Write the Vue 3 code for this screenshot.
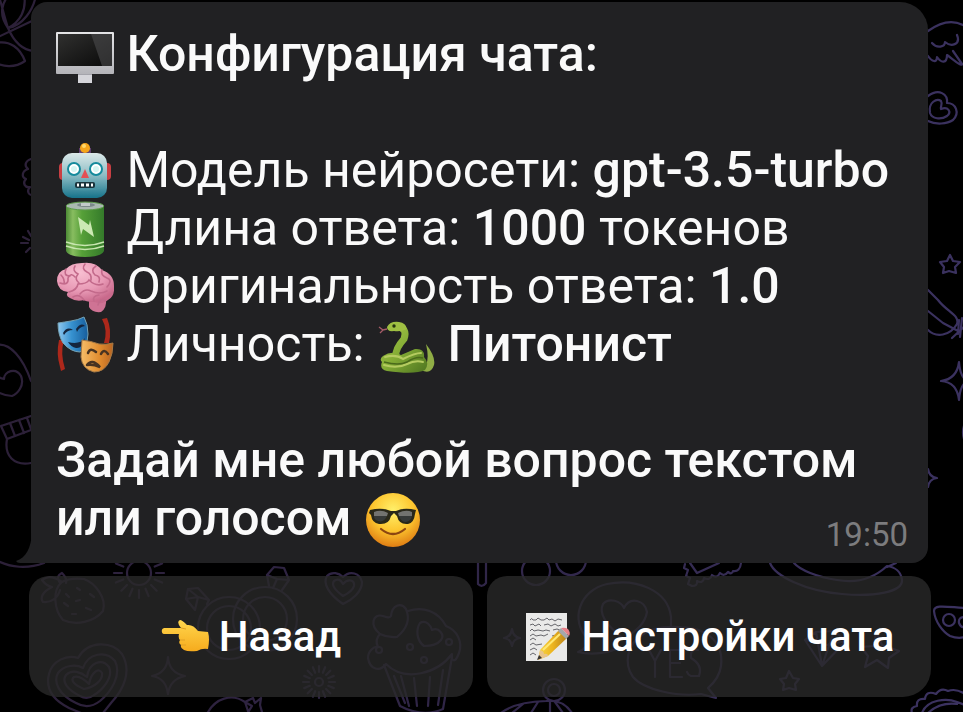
<script setup>
const time = '19:50'
const rays = Array.from({ length: 16 }, (_, i) => i * 22.5)
</script>

<template>
  <main class="chat">
    <svg class="wallpaper" viewBox="0 0 963 712" preserveAspectRatio="xMidYMid slice" aria-hidden="true">
      <defs>
        <linearGradient id="inkPage" gradientUnits="userSpaceOnUse" x1="0" y1="0" x2="963" y2="0">
          <stop offset="0" stop-color="#2c2038" />
          <stop offset="0.5" stop-color="#302648" />
          <stop offset="1" stop-color="#3b3260" />
        </linearGradient>
      </defs>
      <g fill="none" stroke="url(#inkPage)" stroke-width="2.2" stroke-linecap="round" stroke-linejoin="round">
        <!-- leaves -->
        <path d="M8 28C-2 14 2 2 10 -6M8 28C20 22 27 10 24 -6M8 28C22 26 34 10 36 -6M8 28C4 16 2 6 0 0M-4 38L34 20M8 28C14 42 22 50 34 51M-4 43C10 40 20 48 25 61C14 69 2 66 -4 63" />
        <!-- flower and sparks -->
        <path d="M31 159C25 161 24 166 28 169C22 171 21 177 26 179C22 183 25 188 30 187C26 191 29 196 33 195M28 231L31 236M23 237L29 240M21 243L28 243M26 252L30 248" />
        <!-- mitten -->
        <path d="M-4 345C10 342 23 358 31 381M-4 375C2 380 3 378 4 379C4 371 16 367 21 376C25 386 17 394 12 396C5 396 1 394 -4 391M1 426L31 416M1 426L7 439L31 430M10 423L15 436M19 420L24 433M27 418L31 429M7 439C4 456 14 466 31 463M-4 560C10 568 28 569 44 563" />
        <!-- wing, heart, star, feather -->
        <path d="M928 31C943 20 955 20 965 26M932 43C937 49 945 47 945 42C951 47 961 45 957 35M928 56C932 62 937 63 937 57C941 63 947 64 947 55C954 60 962 67 962 64L953 51" />
        <path d="M928 96C939 88 948 94 947 103C956 103 960 113 953 120C947 124 936 125 928 121M930 113C928 102 937 98 941 101C943 104 940 107 941 109C948 106 952 112 947 116C941 120 932 119 930 113Z" />
        <path d="M950 255L953 261L960 262L955 267L956 273L949 271L943 273L944 267L940 262L947 261Z" />
        <path d="M928 290L938 300C947 312 960 315 957 324C950 336 936 338 928 330M928 311L943 323L960 332M959 320L958 334M962 318L960 337M952 338L965 326" />
        <path d="M959 362Q957 379 941 381Q957 382 959 400M959 362Q960 376 966 380M959 400Q960 386 966 382M965 423Q961 432 965 442" />
        <path d="M928 469Q929 477 937 478Q929 479 928 487" />
        <!-- strawberry -->
        <path d="M62 582C52 590 54 610 63 620C76 626 94 622 103 611C107 598 95 583 84 579C74 578 67 579 62 582ZM62 582C50 574 45 578 42 580C45 584 47 586 52 587C42 592 40 598 43 602C51 603 58 598 60 590M60 583C56 576 59 575 62 573C66 577 67 580 66 583M77 588L80 590M90 594L94 597M66 594L69 597M76 601L80 600M86 608L91 610M64 603L68 606M72 614L76 614" />
        <!-- sun -->
        <circle cx="139" cy="573" r="12" />
        <path v-for="angle in rays" :key="angle" :transform="`rotate(${angle} 139 573)`" d="M156 573H164" />
        <!-- rings -->
        <circle cx="229" cy="628" r="31" /><circle cx="229" cy="628" r="22" />
        <circle cx="265" cy="619" r="32" /><circle cx="265" cy="619" r="22" />
        <path d="M195 610L186 599L188 589L198 588L209 600L207 604M186 599L198 597L209 600M188 589L198 597L195 610M269 586L267 575L274 567L284 568L289 580L282 590M267 575L277 579L289 580M277 579L273 588" />
        <!-- small heart -->
        <path d="M343 604C330 595 322 584 327 576C332 571 339 573 343 577C350 570 360 573 362 582C362 592 352 600 343 604ZM343 596C335 590 331 585 334 581C338 578 341 580 343 584C348 578 355 580 354 586C353 590 347 594 343 596Z" />
        <!-- nested hearts -->
        <path d="M69 708C55 701 45 690 49 674C52 661 67 654 78 658C88 640 112 641 122 654C132 671 124 689 111 703L103 713M69 708L81 713M76 703C59 695 53 682 58 673C64 665 76 664 83 668C88 653 106 650 115 661C122 675 111 692 100 701C91 708 83 707 76 703ZM80 696C68 690 61 682 66 675C72 669 81 672 87 677C89 662 102 658 109 667C114 678 101 691 94 695C89 699 85 699 80 696ZM84 689C74 685 70 680 74 677C79 675 84 679 89 684C91 672 99 667 102 673C103 680 95 687 84 689Z" />
        <path d="M168 657Q169 673 185 676Q170 679 168 694Q166 678 152 676Q167 673 168 657Z" />
        <circle cx="319" cy="682" r="4" />
        <path v-for="angle in rays" :key="`small-${angle}`" :transform="`rotate(${angle} 319 682)`" d="M329 682H335" />
        <path d="M207 714C215 698 232 693 245 702L249 714M245 702L252 706L247 714M245 702L253 698L255 703L261 698L260 705L262 712" />
        <!-- cupcake -->
        <path d="M380 634C369 625 373 613 383 616C386 617 389 619 391 616C392 605 401 602 406 609C412 623 403 632 397 637Q388 638 380 634M408 611C423 606 438 611 446 626C457 630 463 642 459 653C455 664 451 661 452 654C438 673 405 683 386 664C380 672 370 670 368 658C368 651 374 646 378 647C375 641 377 637 380 634M424 646C416 640 416 629 420 623C426 619 431 626 432 630C439 627 445 635 441 640C437 645 431 646 424 646Z" />
        <circle cx="379" cy="650" r="3" /><circle cx="410" cy="647" r="3" /><circle cx="449" cy="642" r="3" /><circle cx="424" cy="660" r="3" />
        <path d="M384 665L400 706Q423 718 443 709L452 657M394 676L405 703M401 676L409 706M414 678L417 706M430 677L428 706M443 670L438 705" />
        <!-- objects behind the card edge -->
        <path d="M478 563V584Q482 588 486 583V563" />
        <circle cx="536" cy="571" r="14" /><circle cx="571" cy="560" r="15" />
        <path d="M685 564L684 568L688 570L686 576L690 578L688 584L692 586Q698 586 697 581Q703 584 704 578Q710 581 712 575Q717 579 720 573Q724 577 728 572Q732 575 733 571Q740 572 741 563M690 563L697 573L719 563" />
        <path d="M770 563C775 576 805 591 842 594C874 597 903 592 902 580C901 572 895 567 887 566C872 580 854 583 837 580C817 577 800 570 794 563M887 567L896 563" />
        <!-- conversation balloons -->
        <path d="M578 652C584 650 588 645 588 639C569 620 580 590 607 584C636 578 668 590 671 617V628C706 624 724 642 721 666C720 674 715 682 708 688L716 698L701 694C678 697 644 690 633 677C623 663 628 644 641 636C650 628 664 626 681 627M578 652C594 656 611 652 620 647M624 639C607 626 598 614 603 604C609 597 621 601 624 608C630 596 645 600 647 612C645 625 634 632 624 639Z" />
        <path d="M649 650L655 661L661 650M655 661V677M680 650H670V677H682M670 663H680M698 650Q690 648 691 658Q703 665 699 676L691 676Q688 675 687 672" />
        <path d="M512 629Q513 637 520 638Q513 639 512 646Q511 639 504 638Q511 637 512 629Z" />
        <path d="M805 640L816 632L834 631L846 641L822 666ZM805 640L827 645L846 641M816 632L822 666M834 631L822 666M876 632L882 645L899 651L889 658L888 668L877 660L865 667L868 656L861 647L874 646Z" />
        <path d="M789 671L793 678L799 679L795 684L796 690L789 688L783 690L784 684L780 679L786 678Z" />
        <circle cx="554" cy="690" r="11" /><circle cx="554" cy="690" r="6" />
        <path d="M501 713Q515 702 546 701Q563 699 572 713M512 713L523 704M531 713L538 702M550 713V701M563 713L555 702" />
        <!-- planet and flower -->
        <path d="M965 608C947 607 934 604 934 611C935 622 943 632 950 636Q958 639 965 637" /><circle cx="949" cy="620" r="6" /><path d="M965 617Q958 617 959 623Q961 628 965 627" />
        <path d="M912 713Q910 707 917 706Q916 698 925 699Q926 690 936 694Q941 687 948 691Q956 688 965 694M922 713C927 699 947 698 957 702L965 705M928 713Q940 702 957 704" />
      </g>
    </svg>

    <article class="bubble">
      <svg class="tail" viewBox="0 0 16 30" aria-hidden="true"><path fill="#212123" d="M16 0C15 15 10 25 0 28Q1 30 4 30H16Z" /></svg>
      <p class="line"><strong><svg class="emoji" viewBox="0 0 58 58" role="img" aria-label="Компьютер">
        <defs>
          <linearGradient id="silver" x2="0" y2="1"><stop stop-color="#e5e5e7" /><stop offset="1" stop-color="#b4b4b9" /></linearGradient>
          <linearGradient id="screen" x2="1" y2="1"><stop stop-color="#30302f" /><stop offset="1" stop-color="#090909" /></linearGradient>
        </defs>
        <path fill="#a4a4ab" d="M22 48H36V58H22Z" /><path fill="#d5d5da" d="M22 50H36V58H22Z" />
        <rect y="7" width="58" height="42" rx="1" fill="url(#silver)" /><path fill="url(#screen)" d="M2 9H56V41H2Z" /><path fill="#505052" opacity=".55" d="M35 9H56V41H46Z" />
      </svg> Конфигурация чата:</strong></p>
      <p class="line blank" aria-hidden="true"></p>
      <p class="line"><svg class="emoji" viewBox="0 0 58 58" role="img" aria-label="Робот">
        <defs><linearGradient id="robot" x2="0" y2="1"><stop stop-color="#dce9e9" /><stop offset=".5" stop-color="#8cbcc4" /><stop offset="1" stop-color="#16738a" /></linearGradient></defs>
        <rect x="3" y="22" width="8" height="17" rx="4" fill="#c93f43" /><rect x="47" y="22" width="8" height="17" rx="4" fill="#c93f43" />
        <path fill="#60406e" d="M23 7H35V15H23Z" /><circle cx="29" cy="7" r="5" fill="#f5a51b" /><circle cx="28" cy="5" r="2" fill="#ffd969" />
        <path fill="#76569a" d="M23 11Q29 15 34 11L33 14Q29 16 24 14Z" />
        <rect x="6" y="12" width="45" height="45" rx="10" fill="url(#robot)" /><path fill="none" stroke="#4d98a5" opacity=".6" d="M7 46Q29 52 50 46" />
        <circle cx="18" cy="28" r="6" fill="#fff" stroke="#168a9c" stroke-width="2" /><circle cx="40" cy="28" r="6" fill="#fff" stroke="#168a9c" stroke-width="2" />
        <circle cx="18" cy="28" r="3" fill="#d7f6f3" /><circle cx="40" cy="28" r="3" fill="#d7f6f3" /><path fill="#e44f54" d="M29 28L33 37H25Z" />
        <rect x="19" y="41" width="20" height="6" rx="2" fill="#19333b" /><path stroke="#fff" stroke-width="3" d="M21 44H23M25 44H28M30 44H33M35 44H37" />
      </svg> Модель нейросети: <strong>gpt-3.5-turbo</strong></p>
      <p class="line"><svg class="emoji" viewBox="0 0 58 58" role="img" aria-label="Батарея">
        <defs><linearGradient id="battery"><stop stop-color="#4c8a35" /><stop offset=".18" stop-color="#88bd60" /><stop offset=".42" stop-color="#56a038" /><stop offset="1" stop-color="#347a2a" /></linearGradient></defs>
        <path fill="url(#battery)" d="M10 7V52Q13 58 29 58T48 52V7Z" /><ellipse cx="29" cy="7" rx="19" ry="4" fill="#a9b8b0" stroke="#5c9a49" /><ellipse cx="30" cy="6" rx="9" ry="2" fill="#7c898b" /><path fill="#c2cacb" d="M25 4H34V7H25Z" />
        <path fill="#cce9b4" d="M22 18L33 26L34 21L38 38L27 30L25 36Z" /><path fill="none" stroke="#c8e6b0" stroke-width="1.4" d="M10 43Q29 50 48 43M10 47Q29 54 48 47" />
      </svg> Длина ответа: <strong>1000</strong> токенов</p>
      <p class="line"><svg class="emoji" viewBox="0 0 58 58" role="img" aria-label="Мозг">
        <defs><radialGradient id="brain" cx=".4" cy=".25" r=".75"><stop stop-color="#f8bfd1" /><stop offset=".6" stop-color="#e899b5" /><stop offset="1" stop-color="#c96a8c" /></radialGradient></defs>
        <path fill="#cf7394" d="M33 43L33 50Q36 56 45 55Q51 51 50 42Z" />
        <path fill="url(#brain)" d="M1 24Q1 14 10 12Q15 6 26 6Q39 4 46 13Q58 17 58 29Q59 39 52 43Q47 48 38 45Q31 45 28 43Q20 45 14 41Q9 39 12 35Q2 34 1 24Z" />
        <g fill="none" stroke="#c36a8b" stroke-width="1.6" stroke-linecap="round"><path d="M4 26Q13 29 12 21Q15 15 19 20M10 12Q7 19 14 19M19 9Q16 14 22 17Q18 22 23 26M29 7Q25 12 31 15Q36 17 35 23M40 9Q34 13 39 18Q45 19 43 25M46 13Q44 18 51 21Q57 23 51 30M13 35Q21 33 22 27Q31 27 33 23Q40 30 47 27M24 37Q29 31 35 34Q44 38 51 34M17 40Q23 36 28 43M38 44Q36 39 43 38M50 43Q44 41 42 48M5 18Q9 22 8 27" /></g>
      </svg> Оригинальность ответа: <strong>1.0</strong></p>
      <p class="line"><svg class="emoji" viewBox="0 0 58 58" role="img" aria-label="Маски">
        <defs><linearGradient id="blue-mask"><stop stop-color="#8fc8ef" /><stop offset=".45" stop-color="#3792d0" /><stop offset="1" stop-color="#165d9c" /></linearGradient><linearGradient id="gold-mask"><stop stop-color="#f5bd68" /><stop offset=".6" stop-color="#df8a2d" /><stop offset="1" stop-color="#b86422" /></linearGradient></defs>
        <path fill="#ad281b" d="M46 4L51 3Q56 15 53 28H48Q52 15 46 4ZM3 25L8 25Q4 38 9 54L5 56L4 52Q0 39 3 25Z" />
        <path fill="url(#blue-mask)" stroke="#75a2b4" d="M2 8Q9 7 15 6Q22 5 28 2Q32 9 32 19Q31 34 24 37Q15 37 7 28Q2 20 2 8Z" />
        <path fill="#14263f" d="M7 18Q11 11 17 15Q11 15 8 20ZM20 14Q25 7 29 11Q23 12 21 17ZM12 27Q24 30 29 23Q26 34 20 33Q15 32 12 27Z" />
        <path fill="url(#gold-mask)" stroke="#a77a45" d="M26 25Q35 26 43 29Q50 30 57 28Q57 39 53 47Q48 57 38 57Q26 54 25 42Z" />
        <path fill="none" stroke="#483321" stroke-width="2.5" stroke-linecap="round" d="M32 38Q34 32 40 37M45 39Q48 33 52 39M31 50Q36 43 44 52Q37 49 31 50" />
      </svg> Личность: <svg class="emoji" viewBox="0 0 58 58" role="img" aria-label="Змея">
        <defs><linearGradient id="snake" gradientUnits="userSpaceOnUse" x1="4" y1="8" x2="52" y2="56"><stop stop-color="#a9c94d" /><stop offset=".5" stop-color="#84ac35" /><stop offset="1" stop-color="#4d7420" /></linearGradient></defs>
        <path fill="#8fad45" d="M49 29Q59 42 57 50Q54 60 44 55Q54 50 49 29Z" />
        <path fill="none" stroke="url(#snake)" stroke-width="7" stroke-linecap="round" d="M20 12Q31 13 27 24Q18 34 19 41" />
        <path fill="#9fbf42" d="M10 12Q13 6 22 7Q29 8 30 14Q24 17 17 16Q10 17 10 12Z" />
        <path fill="url(#snake)" d="M6 41Q15 35 24 40L38 34Q48 33 47 42Q53 48 48 55Q38 60 10 56Q2 54 5 47Q2 44 6 41Z" />
        <path fill="none" stroke="#b5cb60" stroke-width="2" stroke-linecap="round" d="M8 42Q19 39 26 44Q38 38 44 38M7 50Q20 54 30 49Q38 45 46 47" /><path fill="none" stroke="#4a6a1b" stroke-width="1.5" d="M7 47Q22 51 30 47Q39 41 46 43" />
        <circle cx="17" cy="11" r="1.7" fill="#26330f" /><path fill="none" stroke="#a65c68" stroke-width="1.3" d="M10 14L6 15L2 12M6 15L3 18" />
      </svg> <strong>Питонист</strong></p>
      <p class="line blank" aria-hidden="true"></p>
      <p class="line"><strong>Задай мне любой вопрос текстом</strong></p>
      <div class="closing">
        <p class="line"><strong>или голосом <svg class="emoji" viewBox="0 0 58 58" role="img" aria-label="Лицо в очках">
          <defs><radialGradient id="face" cx=".5" cy=".32" r=".7"><stop stop-color="#fff06b" /><stop offset=".55" stop-color="#fdc52e" /><stop offset="1" stop-color="#dd7912" /></radialGradient></defs>
          <circle cx="29" cy="31" r="27" fill="url(#face)" /><path fill="#292819" d="M6 21Q18 18 27 22H32Q40 18 52 21L51 25Q50 34 44 35Q35 36 33 27L30 24L27 27Q25 36 15 35Q8 34 7 26L5 24Z" />
          <path fill="#727370" d="M10 23Q17 20 24 24L23 27H10ZM34 24Q42 20 48 23V27H35Z" /><path fill="#353938" d="M10 27H23Q20 34 14 32Q10 31 10 27ZM35 27H48Q47 32 42 33Q37 33 35 27Z" />
          <path fill="none" stroke="#8c4611" stroke-width="2.2" stroke-linecap="round" d="M17 40Q29 50 41 40" />
        </svg></strong></p>
        <time class="time">{{ time }}</time>
      </div>
    </article>

    <nav class="actions" aria-label="Действия чата">
      <button class="action back" type="button"><svg class="icon" viewBox="0 0 48 48" aria-hidden="true">
        <defs><linearGradient id="hand" x2="0" y2="1"><stop stop-color="#ffd64d" /><stop offset="1" stop-color="#f6ab1d" /></linearGradient></defs>
        <path fill="url(#hand)" d="M3 15Q0 16 1 19Q1 21 4 21H18Q17 25 19 27Q17 30 20 32Q19 35 23 37Q27 39 36 38Q41 35 47 36Q49 26 47 19L37 18Q32 11 26 12Q21 7 19 7Q15 9 20 15Z" />
        <path fill="none" stroke="#e0a024" stroke-width="1" d="M19 27H24M20 32H25M20 15L25 16" />
      </svg><span>Назад</span></button>
      <button class="action settings" type="button"><svg class="icon" viewBox="0 0 48 48" aria-hidden="true">
        <defs><linearGradient id="pencil"><stop stop-color="#f8d748" /><stop offset=".5" stop-color="#edb51f" /><stop offset="1" stop-color="#b9821a" /></linearGradient></defs>
        <path fill="#e9e9e8" d="M2 0H43V48H2Z" />
        <g fill="none" stroke="#66666b" stroke-width="1"><path d="M6 7Q8 4 9 7L12 7L14 5L17 7H20L23 5L25 7L28 6L31 8L34 6L38 7M6 12L9 11L11 13L15 11L17 13M20 12L24 11L27 13L31 11L34 13L37 12M6 18L8 16L10 18L14 17L19 18L22 17L26 18M29 17L33 16L38 18M6 23L9 21L12 23L17 22L20 23L24 21M28 23L32 22M6 27L9 25L12 27M6 32L9 30L12 32L18 31M6 37L10 35L13 37M6 42L9 40L12 42" /></g>
        <path fill="url(#pencil)" d="M16 37L35 17L43 25L24 43L14 47Z" /><path fill="none" stroke="#ffe873" stroke-width="2" d="M19 37L36 21" /><path fill="#e8c48c" d="M16 37Q20 38 20 41Q24 40 24 43L14 47Z" /><path fill="#363332" d="M15 42L18 45L13 47Z" /><path fill="#a4a7ab" d="M34 18L37 15L45 23L42 26Z" /><path fill="#e78189" d="M37 15Q41 14 44 16Q47 20 45 23Z" />
      </svg><span>Настройки чата</span></button>
    </nav>
  </main>
</template>

<style>
body { margin: 0; background: #000; }
</style>

<style scoped>
.chat {
  position: relative;
  box-sizing: border-box;
  min-height: 100vh;
  padding: 2px 32px 15px 29px;
  overflow: hidden;
  background: #000;
  color: #fafafa;
  font-family: Roboto, "Noto Sans", sans-serif;
}
.wallpaper {
  position: absolute;
  inset: 0;
  width: 100%;
  height: 100%;
}
.bubble {
  position: relative;
  margin: 0 3px 0 2px;
  padding: 23px 20px 16px 25px;
  border-radius: 16px 28px 16px 0;
  background: #212123;
}
.tail {
  position: absolute;
  left: -15px;
  bottom: 0;
  width: 16px;
  height: 30px;
}
.line {
  margin: 0;
  font-size: 50px;
  line-height: 58px;
}
.blank { height: 58px; }
strong { font-weight: 500; }
.emoji {
  width: 58px;
  height: 58px;
  vertical-align: top;
}
.closing {
  display: flex;
  align-items: flex-end;
  justify-content: space-between;
}
.time {
  margin-bottom: -8px;
  color: #7c7c7e;
  font-size: 33px;
  line-height: 40px;
}
.actions {
  position: relative;
  display: grid;
  grid-template-columns: 1fr 1fr;
  gap: 14px;
  margin-top: 13px;
}
.action {
  display: flex;
  align-items: center;
  justify-content: center;
  gap: 10px;
  min-width: 0;
  height: 121px;
  padding: 0;
  border: 0;
  border-radius: 20px;
  background: rgba(41, 41, 41, 0.8);
  color: #fff;
  font: 500 42px/48px Roboto, "Noto Sans", sans-serif;
  white-space: nowrap;
  cursor: pointer;
}
.back { border-bottom-left-radius: 28px; }
.settings { border-bottom-right-radius: 28px; }
.icon {
  flex: none;
  width: 48px;
  height: 48px;
}
</style>
